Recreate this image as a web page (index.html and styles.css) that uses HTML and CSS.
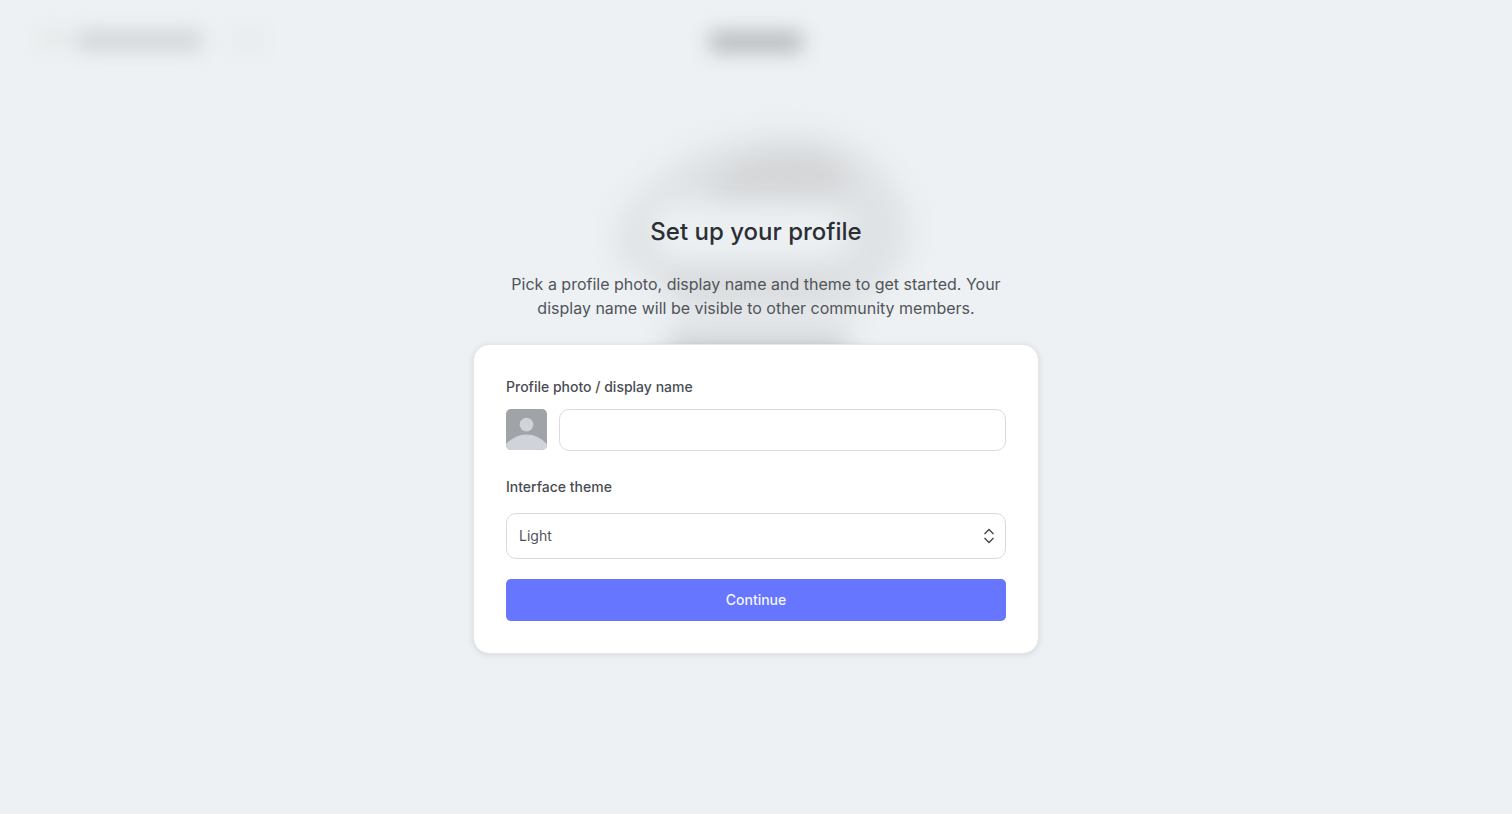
FILE: index.html
```html
<!DOCTYPE html>
<html lang="en">
<head>
<meta charset="utf-8">
<meta name="viewport" content="width=device-width, initial-scale=1">
<title>Set up your profile</title>
<link rel="stylesheet" href="styles.css">
</head>
<body>
<div class="backdrop" aria-hidden="true">
  <svg class="backdrop-brand" width="300" height="90" viewBox="0 0 300 90">
    <rect class="mark" x="42" y="32" width="22" height="14"/>
    <rect class="name" x="76" y="32" width="126" height="17"/>
    <rect class="caret" x="238" y="30" width="20" height="20"/>
  </svg>
  <svg class="backdrop-center" width="400" height="400" viewBox="0 0 400 400">
    <rect class="heading" x="154" y="32" width="92" height="20"/>
    <g class="figure">
      <path fill-rule="evenodd" d="M60 250Q60 205 98 184Q135 138 236 134Q304 136 336 184Q364 220 344 266Q322 296 290 316L124 316L98 276Q70 272 60 250ZM96 218Q96 204 120 203L260 203Q292 208 294 234Q290 258 262 263L118 263Q96 258 96 218Z"/>
      <path class="core" d="M150 184Q200 144 260 154Q300 165 290 192L254 200L160 198Z"/>
      <path class="core" d="M98 272L290 272L262 288L126 288Z"/>
      <rect class="foot" x="112" y="334" width="180" height="50"/>
    </g>
  </svg>
</div>
<main class="setup">
  <h1 class="title">Set up your profile</h1>
  <p class="intro">Pick a profile photo, display name and theme to get started. Your display name will be visible to other community members.</p>
  <form class="card">
    <label class="label" for="display-name">Profile photo / display name</label>
    <div class="profile-row">
      <button class="avatar" type="button" aria-label="Change profile photo">
        <svg viewBox="0 0 42 42" aria-hidden="true"><circle cx="21" cy="16" r="7"/><path d="M0 36Q9 26 21 26T42 36V42H0Z"/></svg>
      </button>
      <input class="name-input" id="display-name" type="text">
    </div>
    <label class="label" for="theme">Interface theme</label>
    <div class="select-wrap">
      <select class="theme-select" id="theme">
        <option>Light</option>
        <option>Dark</option>
      </select>
      <svg class="chevrons" width="12" height="16" viewBox="0 0 12 16" aria-hidden="true"><path d="M1.5 6L6 1.5L10.5 6M1.5 10L6 14.5L10.5 10"/></svg>
    </div>
    <button class="continue" type="submit">Continue</button>
  </form>
</main>
</body>
</html>
```
FILE: styles.css
```css
* {
  box-sizing: border-box;
}

body {
  margin: 0;
  min-height: 100vh;
  display: flex;
  align-items: center;
  justify-content: center;
  background: #edf1f4;
  color: #494d53;
  font-family: Inter, "Liberation Sans", sans-serif;
}

.backdrop {
  position: absolute;
  inset: 0;
  overflow: hidden;
}

.backdrop-brand {
  position: absolute;
  top: 0;
  left: 0;
  filter: blur(10px);
}

.backdrop-center {
  position: absolute;
  top: 0;
  left: calc(50% - 200px);
  overflow: visible;
}

.mark {
  fill: #e0e5de;
}

.name {
  fill: #cdd1d3;
}

.caret {
  fill: #e4e8ea;
}

.heading {
  fill: #b5b8ba;
  filter: blur(10px);
}

.figure {
  fill: #dfe2e4;
  filter: blur(14px);
}

.core {
  fill: #d3d5d7;
}

.foot {
  fill: #cccfd1;
}

.setup {
  position: relative;
  display: flex;
  flex-direction: column;
  align-items: center;
  width: 100%;
  max-width: 566px;
  padding-top: 55px;
}

.title {
  margin: 0 0 24px;
  color: #2b2f34;
  font-size: 24px;
  font-weight: 500;
  line-height: 32px;
}

.intro {
  margin: 0 0 24px;
  padding: 0 32px;
  color: #515459;
  font-size: 16px;
  line-height: 24px;
  text-align: center;
}

.card {
  display: flex;
  flex-direction: column;
  width: 100%;
  padding: 32px;
  border: 1px solid #e6e8eb;
  border-radius: 16px;
  background: #fff;
  background-clip: padding-box;
  box-shadow: 0 1px 6px rgba(0, 0, 0, 0.1);
}

.label {
  margin-bottom: 12px;
  font-size: 14px;
  font-weight: 500;
  line-height: 20px;
}

.profile-row {
  display: flex;
  gap: 12px;
  margin-bottom: 26px;
}

.avatar {
  flex: none;
  width: 41px;
  height: 41px;
  padding: 0;
  border: 0;
  border-radius: 5px;
  overflow: hidden;
  background: #a0a3a8;
}

.avatar svg {
  display: block;
  fill: #d0d3d9;
}

.name-input {
  flex: 1;
  min-width: 0;
  height: 42px;
  padding: 0 12px;
  border: 1px solid #d9dbde;
  border-radius: 10px;
  background: #fff;
  color: inherit;
  font: inherit;
}

.select-wrap {
  position: relative;
  margin: 4px 0 20px;
}

.theme-select {
  display: block;
  width: 100%;
  height: 46px;
  padding: 0 12px;
  border: 1px solid #d9dbde;
  border-radius: 10px;
  appearance: none;
  background: #fff;
  color: #515459;
  font: 400 14px/20px Inter, "Liberation Sans", sans-serif;
}

.chevrons {
  position: absolute;
  top: 15px;
  right: 11px;
  fill: none;
  stroke: #3f4349;
  stroke-width: 1.3;
  pointer-events: none;
}

.continue {
  height: 42px;
  border: 0;
  border-radius: 5px;
  background: #6776ff;
  color: #f4f5ff;
  font: 500 14px/20px Inter, "Liberation Sans", sans-serif;
}
```
